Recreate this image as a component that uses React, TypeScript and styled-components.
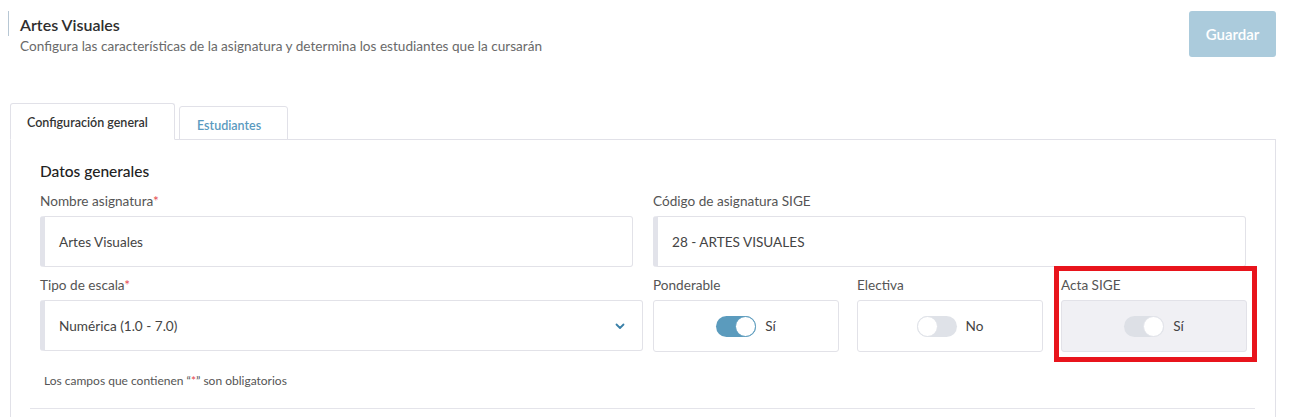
import styled, { createGlobalStyle } from 'styled-components';

const GlobalStyle = createGlobalStyle`
  html, body {
    margin: 0;
    padding: 0;
    background: #ffffff;
    font-family: Lato, "Noto Sans", "Liberation Sans", sans-serif;
    color: #333;
  }
  * { box-sizing: border-box; }
`;

const Page = styled.div`
  width: 1290px;
  height: 417px;
  overflow: hidden;
  padding: 11px 14px 0 10px;
`;

const Header = styled.div`
  display: flex;
  justify-content: space-between;
  align-items: flex-start;
`;

const TitleBlock = styled.div`
  border-left: 1px solid #b7c7d4;
  margin-left: -2px;
  padding: 2px 0 0 11px;
  height: 25px;
`;

const Title = styled.h1`
  margin: 0;
  font-size: 16px;
  font-weight: 600;
  color: #2e2e2e;
  line-height: 23px;
`;

const Subtitle = styled.p`
  margin: 1px 0 0;
  font-size: 13.6px;
  color: #6a6a6a;
  line-height: 18px;
  white-space: nowrap;
`;

const SaveButton = styled.button`
  width: 87px;
  height: 46px;
  border: none;
  border-radius: 3px;
  background: #abcbdc;
  color: #ffffff;
  font-family: inherit;
  font-size: 15px;
  font-weight: 600;
  cursor: default;
`;

const Tabs = styled.div`
  display: flex;
  align-items: flex-end;
  gap: 4px;
  margin-top: 46px;
  position: relative;
  z-index: 1;
`;

const Tab = styled.div<{ $active?: boolean; $width: number }>`
  width: ${({ $width }) => $width}px;
  height: ${({ $active }) => ($active ? '37px' : '34px')};
  padding-left: ${({ $active }) => ($active ? '16px' : '17px')};
  padding-top: ${({ $active }) => ($active ? '2px' : '5px')};
  border: 1px solid #e1e1e8;
  border-bottom: ${({ $active }) => ($active ? '1px solid #ffffff' : '1px solid #e1e1e8')};
  border-radius: 3px 3px 0 0;
  background: #ffffff;
  font-size: 12.5px;
  font-weight: 600;
  color: ${({ $active }) => ($active ? '#333' : '#5a9ac0')};
  display: flex;
  align-items: center;
  margin-bottom: -1px;
`;

const Panel = styled.div`
  border: 1px solid #e1e1e8;
  border-bottom: none;
  width: 1266px;
  padding: 20px 20px 0 19px;
  height: 300px;
`;

const SectionTitle = styled.h2`
  margin: 0 0 0 10px;
  font-size: 15.5px;
  font-weight: 500;
  color: #222;
  line-height: 22px;
`;

const Row = styled.div<{ $top: number }>`
  display: flex;
  margin-top: ${({ $top }) => $top}px;
`;

const Field = styled.div<{ $width: number; $gap?: number }>`
  width: ${({ $width }) => $width}px;
  margin-left: ${({ $gap }) => $gap ?? 0}px;
  position: relative;
`;

const Label = styled.div`
  font-size: 13.6px;
  color: #555;
  line-height: 18px;
  margin-bottom: 6px;
  white-space: nowrap;
`;

const Req = styled.span`
  color: #e5484d;
`;

const InputBox = styled.div`
  height: 51px;
  border: 1px solid #e2e2e8;
  border-left: 5px solid #e2e3ea;
  border-radius: 3px;
  display: flex;
  align-items: center;
  justify-content: space-between;
  padding: 0 16px 0 14px;
  font-size: 13.6px;
  color: #444;
`;

const Chevron = styled.svg`
  width: 12px;
  height: 12px;
`;

const SwitchBox = styled.div<{ $disabled?: boolean }>`
  height: 52px;
  border: 1px solid #e2e2e8;
  border-radius: 3px;
  background: ${({ $disabled }) => ($disabled ? '#f0f0f4' : '#ffffff')};
  display: flex;
  align-items: center;
  justify-content: center;
  gap: 9px;
  font-size: 13.6px;
  color: #444;
`;

const Track = styled.div<{ $on?: boolean; $disabled?: boolean }>`
  width: 40px;
  height: 21px;
  border-radius: 11px;
  background: ${({ $on, $disabled }) => ($disabled ? '#dde0e6' : $on ? '#5b9bbd' : '#dfe2e8')};
  position: relative;
`;

const Knob = styled.div<{ $on?: boolean; $disabled?: boolean }>`
  position: absolute;
  top: 0;
  ${({ $on }) => ($on ? 'right: 0;' : 'left: 0;')}
  width: 21px;
  height: 21px;
  border-radius: 50%;
  background: #ffffff;
  border: 1px solid ${({ $on, $disabled }) => ($disabled ? '#e2e4ea' : $on ? '#5b9bbd' : '#dfe2e8')};
`;

const Highlight = styled.div`
  position: absolute;
  left: -7px;
  top: -10px;
  width: 203px;
  height: 96px;
  border: 5px solid #e8141c;
  pointer-events: none;
`;

const Note = styled.div`
  margin: 21px 0 0 14px;
  font-size: 12px;
  color: #555;
`;

const Divider = styled.div`
  margin-top: 20px;
  width: 1225px;
  border-top: 1px solid #e4e4ea;
`;

type SwitchProps = { label: string; on: boolean; text: string; disabled?: boolean; width: number; gap: number; highlight?: boolean };

const SwitchField = ({ label, on, text, disabled, width, gap, highlight }: SwitchProps) => (
  <Field $width={width} $gap={gap}>
    {highlight && <Highlight />}
    <Label>{label}</Label>
    <SwitchBox $disabled={disabled}>
      <Track $on={on} $disabled={disabled}>
        <Knob $on={on} $disabled={disabled} />
      </Track>
      <span>{text}</span>
    </SwitchBox>
  </Field>
);

export default function App() {
  return (
    <>
      <GlobalStyle />
      <Page>
        <Header>
          <TitleBlock>
            <Title>Artes Visuales</Title>
            <Subtitle>Configura las características de la asignatura y determina los estudiantes que la cursarán</Subtitle>
          </TitleBlock>
          <SaveButton>Guardar</SaveButton>
        </Header>
        <Tabs>
          <Tab $active $width={165}>Configuración general</Tab>
          <Tab $width={109}>Estudiantes</Tab>
        </Tabs>
        <Panel>
          <SectionTitle>Datos generales</SectionTitle>
          <Row $top={10}>
            <Field $width={593} $gap={10}>
              <Label>Nombre asignatura<Req>*</Req></Label>
              <InputBox>Artes Visuales</InputBox>
            </Field>
            <Field $width={593} $gap={20}>
              <Label>Código de asignatura SIGE</Label>
              <InputBox>28 - ARTES VISUALES</InputBox>
            </Field>
          </Row>
          <Row $top={9}>
            <Field $width={603} $gap={10}>
              <Label>Tipo de escala<Req>*</Req></Label>
              <InputBox>
                Numérica (1.0 - 7.0)
                <Chevron viewBox="0 0 12 12">
                  <path d="M2.5 4.5 L6 8 L9.5 4.5" fill="none" stroke="#3a80a8" strokeWidth="1.8" strokeLinecap="round" strokeLinejoin="round" />
                </Chevron>
              </InputBox>
            </Field>
            <SwitchField label="Ponderable" on text="Sí" width={186} gap={10} />
            <SwitchField label="Electiva" on={false} text="No" width={186} gap={18} />
            <SwitchField label="Acta SIGE" on text="Sí" disabled width={186} gap={18} highlight />
          </Row>
          <Note>Los campos que contienen “<Req>*</Req>” son obligatorios</Note>
          <Divider />
        </Panel>
      </Page>
    </>
  );
}
